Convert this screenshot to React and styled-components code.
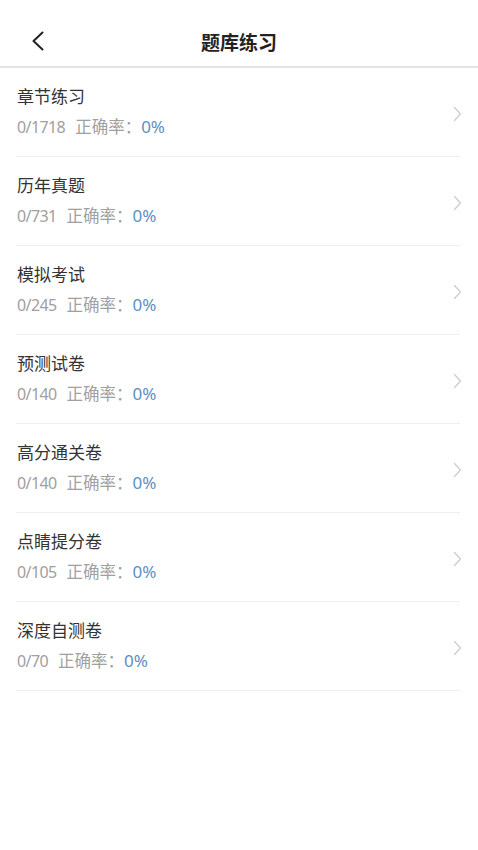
import React from "react";
import styled, { createGlobalStyle } from "styled-components";

const items = [
  { name: "章节练习", done: 0, total: 1718, rate: "0%" },
  { name: "历年真题", done: 0, total: 731, rate: "0%" },
  { name: "模拟考试", done: 0, total: 245, rate: "0%" },
  { name: "预测试卷", done: 0, total: 140, rate: "0%" },
  { name: "高分通关卷", done: 0, total: 140, rate: "0%" },
  { name: "点睛提分卷", done: 0, total: 105, rate: "0%" },
  { name: "深度自测卷", done: 0, total: 70, rate: "0%" },
];

export default function App() {
  return (
    <>
      <GlobalStyle />
      <Page>
        <Header>
          <BackButton aria-label="返回">
            <svg width="14" height="20" viewBox="0 0 14 20">
              <path d="M11.5 1.5 L2.5 10 L11.5 18.5" fill="none" stroke="#222" strokeWidth="2" strokeLinecap="round" strokeLinejoin="round" />
            </svg>
          </BackButton>
          <Title>题库练习</Title>
        </Header>
        <List>
          {items.map((it) => (
            <Row key={it.name}>
              <Info>
                <Name>{it.name}</Name>
                <Stats>
                  <Count>{it.done}/{it.total}</Count>
                  <Label>正确率：</Label>
                  <Rate>{it.rate}</Rate>
                </Stats>
              </Info>
              <svg width="9" height="16" viewBox="0 0 9 16">
                <path d="M1.5 1.5 L7.5 8 L1.5 14.5" fill="none" stroke="#cdcdcd" strokeWidth="1.3" strokeLinecap="round" strokeLinejoin="round" />
              </svg>
            </Row>
          ))}
        </List>
      </Page>
    </>
  );
}

const GlobalStyle = createGlobalStyle`
  body {
    margin: 0;
    background: #fff;
    font-family: "Noto Sans", "Noto Sans CJK SC", sans-serif;
  }
`;

const Page = styled.div`
  width: 478px;
  min-height: 850px;
  background: #fff;
`;

const Header = styled.div`
  position: relative;
  height: 66px;
  display: flex;
  align-items: center;
  justify-content: center;
  border-bottom: 2px solid #e4e4e4;
`;

const BackButton = styled.div`
  position: absolute;
  left: 31px;
  top: 31px;
  display: flex;
`;

const Title = styled.div`
  font-size: 19px;
  font-weight: 700;
  color: #222;
  margin-top: 18px;
`;

const List = styled.div`
  padding: 0 18px 0 16px;
`;

const Row = styled.div`
  height: 88px;
  display: flex;
  align-items: center;
  justify-content: space-between;
  border-bottom: 1px solid #efefef;
  svg {
    margin-top: 4px;
    margin-right: -2px;
  }
`;

const Info = styled.div`
  display: flex;
  flex-direction: column;
  gap: 7px;
  padding-left: 1px;
`;

const Name = styled.div`
  font-size: 17px;
  color: #333;
  line-height: 24px;
  margin-top: -1px;
`;

const Stats = styled.div`
  display: flex;
  align-items: baseline;
  font-size: 16px;
  color: #a0a0a0;
  line-height: 22px;
`;

const Count = styled.span`
  font-size: 16px;
  letter-spacing: -0.6px;
`;

const Label = styled.span`
  font-size: 16.5px;
  margin-left: 10px;
`;

const Rate = styled.span`
  font-size: 17px;
  color: #5a90c2;
`;
